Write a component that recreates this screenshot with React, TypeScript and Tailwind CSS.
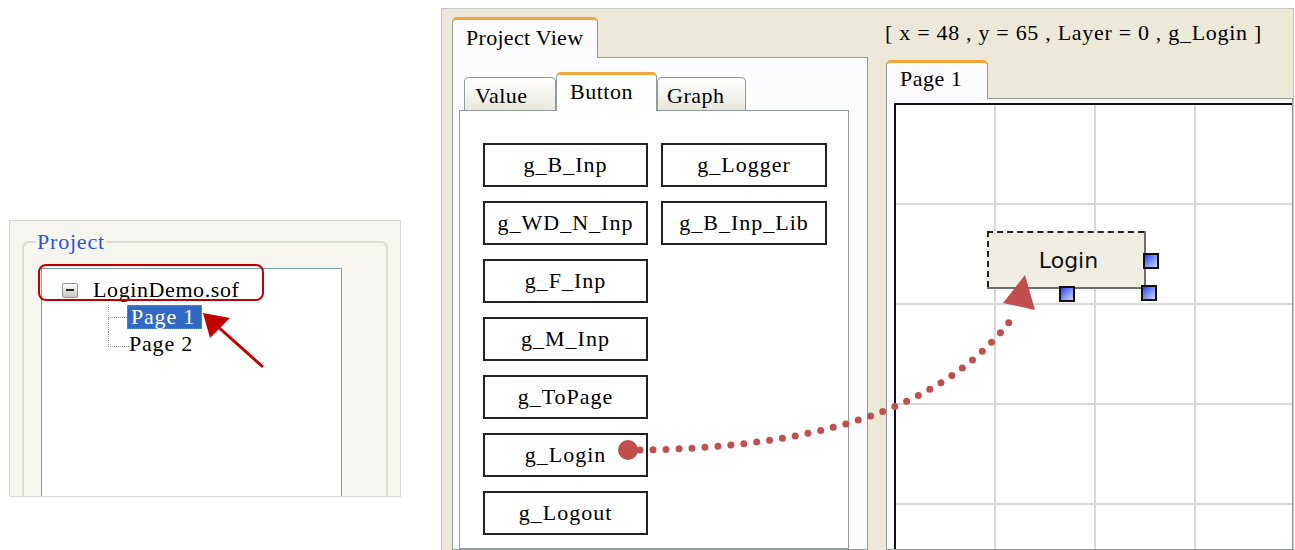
import React from "react";

const buttonsLeft = ["g_B_Inp", "g_WD_N_Inp", "g_F_Inp", "g_M_Inp", "g_ToPage", "g_Login", "g_Logout"];
const buttonsRight = ["g_Logger", "g_B_Inp_Lib"];

const GButton = ({ label }: { label: string }) => (
  <div className="h-[44px] border-2 border-[#222] bg-white flex items-center justify-center text-[22px] tracking-[1px] leading-none">
    {label}
  </div>
);

const Handle = ({ className }: { className: string }) => (
  <div
    className={`absolute w-[16px] h-[16px] border-2 border-[#111] bg-linear-to-br from-[#3434f4] to-[#d4d4ff] ${className}`}
  />
);

const ProjectTree = () => (
  <div className="w-[392px] h-[277px] border border-[#d6d6d6] bg-[#f6f5f0] overflow-hidden pt-[9px] pl-[12px] pr-[12px]">
    <fieldset className="h-[300px] border-2 border-[#dcdbcd] rounded-[7px]">
      <legend className="ml-[12px] px-[1px] text-[22px] leading-[24px] tracking-[0.8px] text-[#2a55d8]">Project</legend>
      <div className="ml-[17px] mt-[14px] w-[301px] h-[260px] border border-[#7f9db9] bg-white pt-[9px] pl-[20px]">
        {/* root node */}
        <div className="flex items-center h-[24px]">
          <div className="w-[16px] h-[15px] border border-[#8a97a3] rounded-[2px] bg-linear-to-b from-white to-[#c9c8bf] flex items-center justify-center">
            <div className="w-[8px] h-[2px] bg-[#222]" />
          </div>
          <span className="ml-[15px] text-[22px] leading-[24px] tracking-[0.6px]">LoginDemo.sof</span>
        </div>
        {/* child nodes */}
        <div className="ml-[46px] mt-[3px]">
          <div className="flex h-[27px]">
            <div className="w-[19px] flex flex-col">
              <div className="h-[13px] border-l border-b border-dotted border-[#9a9a9a]" />
              <div className="flex-1 border-l border-dotted border-[#9a9a9a]" />
            </div>
            <div className="h-[24px] bg-[#316ac5] text-white border border-dotted border-[#c4852c] pl-[3px] pr-[6px] text-[22px] leading-[22px] tracking-[0.8px]">
              Page 1
            </div>
          </div>
          <div className="flex h-[24px]">
            <div className="w-[21px]">
              <div className="h-[15px] border-l border-b border-dotted border-[#9a9a9a]" />
            </div>
            <div className="text-[22px] leading-[24px] tracking-[0.8px]">Page 2</div>
          </div>
        </div>
      </div>
    </fieldset>
  </div>
);

const Designer = () => (
  <div className="w-[853px] h-[542px] border-l border-t border-r border-[#c4c4c4] bg-[#ece9d8] flex pl-[10px] pt-[8px] overflow-hidden">
    {/* Project View */}
    <div className="w-[416px] flex flex-col">
      <div className="relative z-10 -mb-px w-[146px] h-[41px] bg-[#fcfcfe] border-x border-[#919b9c] border-t-[3px] border-t-[#f2a53c] rounded-t-[5px] pl-[13px] pt-[5px] text-[22px] leading-[26px] tracking-[0.3px]">
        Project View
      </div>
      <div className="flex-1 border border-[#919b9c] bg-[#fcfcfe] pt-[14px] pl-[6px] pr-[18px] flex flex-col">
        <div className="flex items-end h-[38px] pl-[5px]">
          <div className="w-[92px] h-[33px] border border-b-0 border-[#919b9c] rounded-t-[5px] bg-linear-to-b from-white to-[#e9e7dc] pl-[10px] pt-[6px] text-[22px] leading-[24px] tracking-[0.5px]">
            Value
          </div>
          <div className="relative z-10 -mb-px w-[101px] h-[39px] bg-white border-x border-[#919b9c] border-t-[3px] border-t-[#f2a53c] rounded-t-[5px] pl-[13px] pt-[5px] text-[22px] leading-[24px] tracking-[0.5px]">
            Button
          </div>
          <div className="w-[89px] h-[33px] border border-b-0 border-[#919b9c] rounded-t-[5px] bg-linear-to-b from-white to-[#e9e7dc] pl-[9px] pt-[6px] text-[22px] leading-[24px] tracking-[0.5px]">
            Graph
          </div>
        </div>
        <div className="flex-1 border border-[#919b9c] bg-white pt-[32px] pl-[23px] flex gap-[13px] items-start">
          <div className="w-[165px] flex flex-col gap-[14px]">
            {buttonsLeft.map((b) => (
              <GButton key={b} label={b} />
            ))}
          </div>
          <div className="w-[166px] flex flex-col gap-[14px]">
            {buttonsRight.map((b) => (
              <GButton key={b} label={b} />
            ))}
          </div>
        </div>
      </div>
    </div>

    {/* Page editor */}
    <div className="ml-[18px] flex-1 flex flex-col min-w-0">
      <div className="h-[43px] -ml-px pt-[2px] text-[22px] leading-[28px] tracking-[0.7px] whitespace-nowrap">
        [ x = 48 , y = 65 , Layer = 0 , g_Login ]
      </div>
      <div className="relative z-10 -mb-px w-[102px] h-[39px] bg-[#fcfcfe] border-x border-[#919b9c] border-t-[3px] border-t-[#f2a53c] rounded-t-[5px] pl-[13px] pt-[4px] text-[22px] leading-[24px] tracking-[0.5px]">
        Page 1
      </div>
      <div className="flex-1 border border-[#919b9c] bg-[#fcfcfe] pt-[4px] pl-[7px] overflow-hidden">
        <div className="relative w-[520px] h-[500px] border-l-2 border-t-2 border-[#111] bg-white">
          <div className="flex flex-wrap w-[500px]">
            {Array.from({ length: 25 }).map((_, i) => (
              <div key={i} className="w-[100px] h-[100px] border-r-2 border-b-2 border-[#d7d7d7]" />
            ))}
          </div>
          <div className="absolute left-[91px] top-[126px] w-[159px] h-[58px] border-r-2 border-b-2 border-[#6e6e6e]">
            <div className="w-full h-full border-t-2 border-l-2 border-dashed border-[#222] bg-[#f0eee2] flex items-center justify-center pl-[4px] font-['DejaVu_Sans',sans-serif] text-[22px] text-[#111]">
              Login
            </div>
          </div>
          <Handle className="left-[247px] top-[148px]" />
          <Handle className="left-[163px] top-[181px]" />
          <Handle className="left-[245px] top-[180px]" />
        </div>
      </div>
    </div>
  </div>
);

export default function App() {
  return (
    <div className="relative w-[1295px] h-[550px] overflow-hidden bg-white flex items-start font-['Liberation_Serif',serif] text-black">
      <div className="ml-[9px] mt-[220px]">
        <ProjectTree />
      </div>
      <div className="ml-[40px] mt-[8px]">
        <Designer />
      </div>

      {/* annotations */}
      <svg className="absolute inset-0 pointer-events-none" width={1295} height={550} viewBox="0 0 1295 550">
        <rect x={39} y={265} width={224} height={35} rx={7} fill="none" stroke="#c00000" strokeWidth={2} />
        <line x1={263} y1={367} x2={216} y2={325} stroke="#c00000" strokeWidth={3} />
        <polygon points="203,313 210,338 230,318" fill="#c00000" />

        <circle cx={628} cy={450} r={10} fill="#c0504d" />
        <path
          d="M640,450 C790,448 940,420 1016,313"
          fill="none"
          stroke="#c0504d"
          strokeWidth={7}
          strokeLinecap="round"
          strokeDasharray="0 13"
        />
        <polygon points="1025,275 1003,303 1035,310" fill="#c0504d" />
      </svg>
    </div>
  );
}
